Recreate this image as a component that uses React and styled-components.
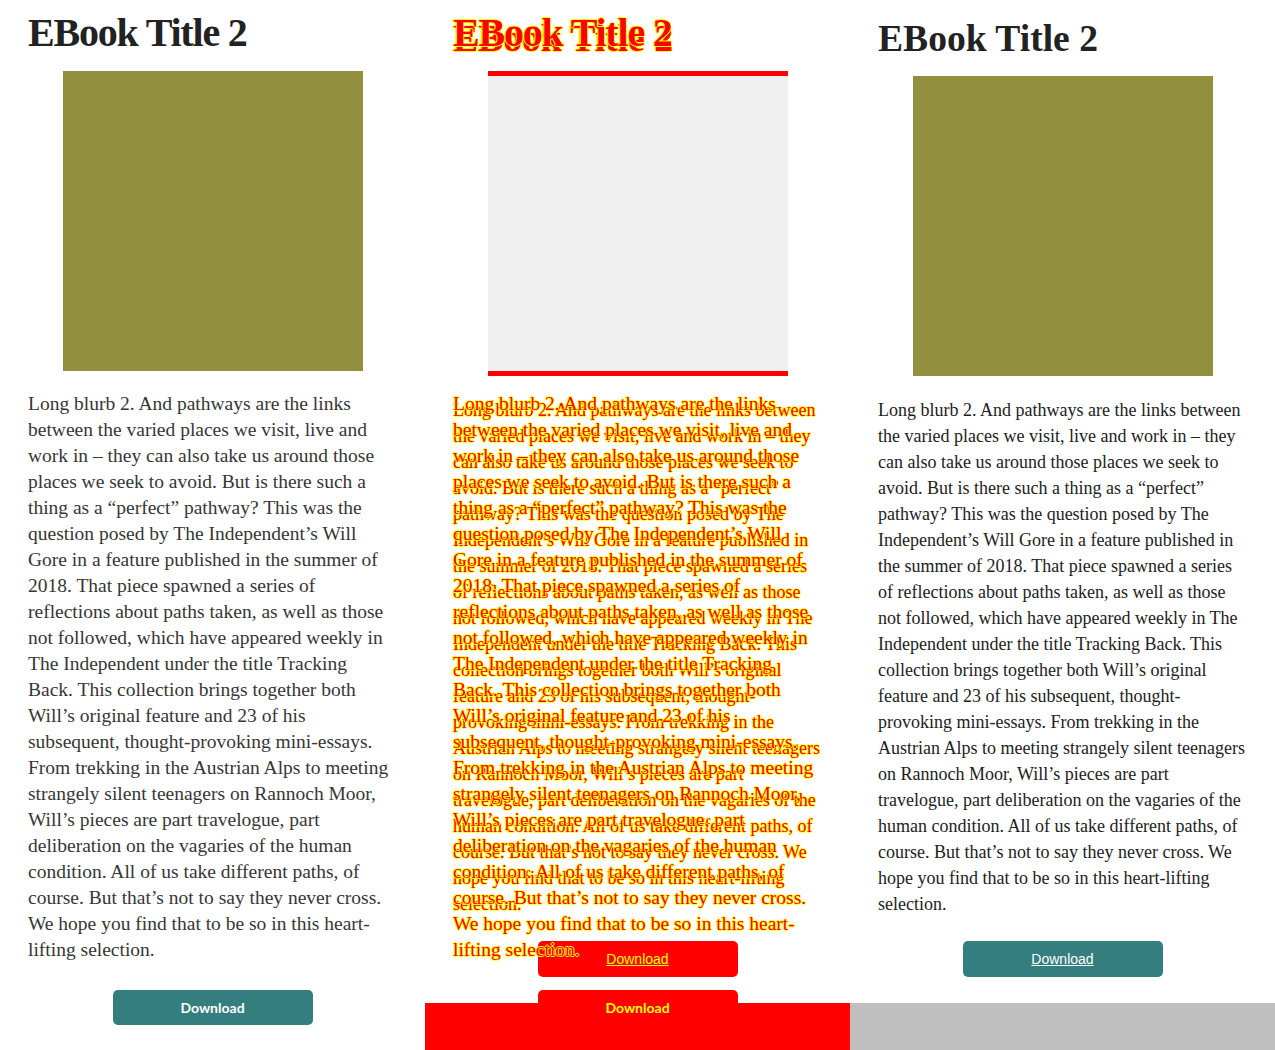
import React from 'react';
import styled, { createGlobalStyle, css } from 'styled-components';

const GlobalStyle = createGlobalStyle`
  html, body { margin: 0; padding: 0; background: #ffffff; }
  body { width: 1275px; height: 1050px; overflow: hidden; }
`;

const BOOK = {
  title: 'EBook Title 2',
  blurb:
    'Long blurb 2. And pathways are the links between the varied places we visit, live and work in – they can also take us around those places we seek to avoid. But is there such a thing as a “perfect” pathway? This was the question posed by The Independent’s Will Gore in a feature published in the summer of 2018. That piece spawned a series of reflections about paths taken, as well as those not followed, which have appeared weekly in The Independent under the title Tracking Back. This collection brings together both Will’s original feature and 23 of his subsequent, thought-provoking mini-essays. From trekking in the Austrian Alps to meeting strangely silent teenagers on Rannoch Moor, Will’s pieces are part travelogue, part deliberation on the vagaries of the human condition. All of us take different paths, of course. But that’s not to say they never cross. We hope you find that to be so in this heart-lifting selection.',
  // line breaks of the expected rendering (its web font is wider than the fallback)
  expectedLines: [
    'Long blurb 2. And pathways are the links',
    'between the varied places we visit, live and',
    'work in – they can also take us around those',
    'places we seek to avoid. But is there such a',
    'thing as a “perfect” pathway? This was the',
    'question posed by The Independent’s Will',
    'Gore in a feature published in the summer of',
    '2018. That piece spawned a series of',
    'reflections about paths taken, as well as those',
    'not followed, which have appeared weekly in',
    'The Independent under the title Tracking',
    'Back. This collection brings together both',
    'Will’s original feature and 23 of his',
    'subsequent, thought-provoking mini-essays.',
    'From trekking in the Austrian Alps to meeting',
    'strangely silent teenagers on Rannoch Moor,',
    'Will’s pieces are part travelogue, part',
    'deliberation on the vagaries of the human',
    'condition. All of us take different paths, of',
    'course. But that’s not to say they never cross.',
    'We hope you find that to be so in this heart-',
    'lifting selection.',
  ],
};

const M = {
  expected: {
    titleSize: 40, titleSpacing: -1.2, titleTop: 13.4, coverTop: 17.6, blurbSize: 19.5, blurbTop: 20,
    blurbColor: '#363636', buttonTop: 27, buttonHeight: 35, bottom: 0,
  },
  actual: {
    titleSize: 37.6, titleSpacing: 0, titleTop: 20.4, coverTop: 18, blurbSize: 18, blurbTop: 21,
    blurbColor: '#222222', buttonTop: 24, buttonHeight: 36, bottom: 26,
  },
};

const diffInk = css`
  color: #ff0000;
  text-shadow: 1px 0 #ffff00, -1px 0 #ffff00, 0 1px #ffff00, 0 -1px #ffff00;
`;

const Screen = styled.div`
  display: flex;
  width: 1275px;
  height: 1050px;
`;

const Pane = styled.div`
  width: 425px;
  height: 1050px;
  flex: none;
  overflow: hidden;
  display: flex;
  flex-direction: column;
  background: #ffffff;
`;

const DiffPane = styled.div`
  width: 425px;
  height: 1050px;
  flex: none;
  overflow: hidden;
  display: grid;
  grid-template: 1fr / 1fr;
  background: #ffffff;
  & > * { grid-area: 1 / 1; }
`;

const MissingBand = styled.div`
  flex: 1;
  align-self: ${p => (p.$diff ? 'end' : 'stretch')};
  height: ${p => (p.$diff ? '47px' : 'auto')};
  background: ${p => (p.$diff ? '#ff0000' : '#bfbfbf')};
`;

const Card = styled.article`
  align-self: start;
  display: flex;
  flex-direction: column;
  padding: 0 28px ${p => M[p.$variant].bottom}px;
  flex: none;
`;

const Title = styled.h1`
  margin: ${p => M[p.$variant].titleTop}px 0 0;
  font-family: 'Liberation Serif', 'Times New Roman', serif;
  font-weight: 700;
  font-size: ${p => M[p.$variant].titleSize}px;
  letter-spacing: ${p => M[p.$variant].titleSpacing}px;
  line-height: 1;
  color: #222222;
  white-space: nowrap;
  ${p => p.$diff && diffInk}
`;

const Cover = styled.div`
  align-self: center;
  box-sizing: border-box;
  width: 300px;
  height: 300px;
  margin-top: ${p => M[p.$variant].coverTop}px;
  background: #928f3e;
  ${p => p.$diff && p.$variant === 'actual' && css`background: #ff0000;`}
  ${p => p.$diff && p.$variant === 'expected' && css`
    background: #f0f0f0;
    border-top: 5px solid #ff0000;
  `}
`;

const Blurb = styled.p`
  margin: ${p => M[p.$variant].blurbTop}px 0 0;
  width: 369px;
  font-family: 'Liberation Serif', 'Times New Roman', serif;
  font-size: ${p => M[p.$variant].blurbSize}px;
  line-height: 26px;
  color: ${p => M[p.$variant].blurbColor};
  ${p => p.$diff && diffInk}
`;

const BlurbLine = styled.span`
  display: block;
  white-space: nowrap;
`;

const Button = styled.a`
  align-self: center;
  display: flex;
  align-items: center;
  justify-content: center;
  width: 200px;
  height: ${p => M[p.$variant].buttonHeight}px;
  margin-top: ${p => M[p.$variant].buttonTop}px;
  border-radius: 5px;
  background: ${p => (p.$diff ? '#ff0000' : '#347e7f')};
  color: ${p => (p.$diff ? '#ffff00' : '#ffffff')};
  cursor: pointer;
  ${p => p.$variant === 'expected'
    ? css`
      font-family: Lato, 'Noto Sans', sans-serif;
      font-weight: 700;
      font-size: 14px;
      text-decoration: none;
    `
    : css`
      font-family: 'Liberation Sans', Arial, sans-serif;
      font-weight: 400;
      font-size: 14px;
      text-decoration: underline;
    `}
`;

function BookCard({ variant, diff }) {
  return (
    <Card $variant={variant}>
      <Title $variant={variant} $diff={diff}>{BOOK.title}</Title>
      <Cover $variant={variant} $diff={diff} />
      <Blurb $variant={variant} $diff={diff}>
        {variant === 'expected'
          ? BOOK.expectedLines.map((line, i) => <BlurbLine key={i}>{line}</BlurbLine>)
          : BOOK.blurb}
      </Blurb>
      <Button $variant={variant} $diff={diff}>Download</Button>
    </Card>
  );
}

export default function App() {
  return (
    <>
      <GlobalStyle />
      <Screen>
        <Pane>
          <BookCard variant="expected" />
        </Pane>
        <DiffPane>
          <MissingBand $diff />
          <BookCard variant="actual" diff />
          <BookCard variant="expected" diff />
        </DiffPane>
        <Pane>
          <BookCard variant="actual" />
          <MissingBand />
        </Pane>
      </Screen>
    </>
  );
}
